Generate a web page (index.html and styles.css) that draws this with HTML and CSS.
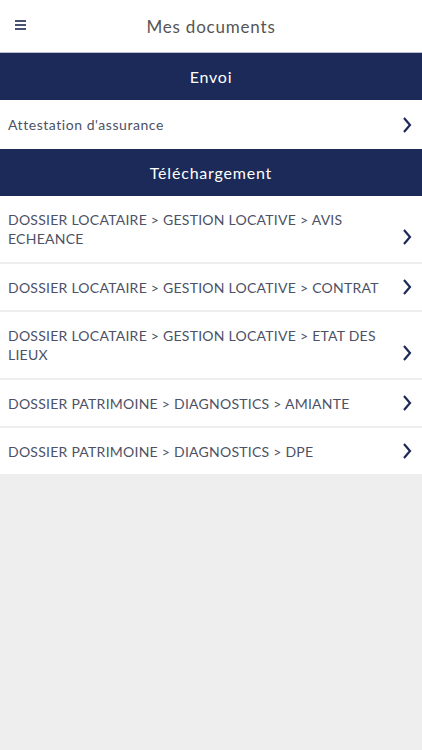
FILE: index.html
```html
<!DOCTYPE html>
<html lang="fr">
<head>
    <meta charset="UTF-8">
    <meta name="viewport" content="width=device-width, initial-scale=1.0">
    <title>Mes documents</title>
    <link rel="stylesheet" href="styles.css">
</head>
<body>
    <!-- Top bar -->
    <div class="top-bar">
        <div class="menu-btn">
            <span></span><span></span><span></span>
        </div>
        <div class="page-title">Mes documents</div>
    </div>

    <!-- Envoi -->
    <div class="section-head">Envoi</div>
    <div class="doc-list">
        <div class="doc-row upload">
            <div class="doc-name mixed">Attestation d'assurance</div>
            <svg class="chevron" viewBox="0 0 10 18"><path d="M2 2l6 7-6 7"/></svg>
        </div>
    </div>

    <!-- Téléchargement -->
    <div class="section-head">Téléchargement</div>
    <div class="doc-list">
        <div class="doc-row tall">
            <div class="doc-name">DOSSIER LOCATAIRE &gt; GESTION LOCATIVE &gt; AVIS ECHEANCE</div>
            <svg class="chevron low" viewBox="0 0 10 18"><path d="M2 2l6 7-6 7"/></svg>
        </div>
        <div class="doc-row">
            <div class="doc-name">DOSSIER LOCATAIRE &gt; GESTION LOCATIVE &gt; CONTRAT</div>
            <svg class="chevron" viewBox="0 0 10 18"><path d="M2 2l6 7-6 7"/></svg>
        </div>
        <div class="doc-row tall">
            <div class="doc-name">DOSSIER LOCATAIRE &gt; GESTION LOCATIVE &gt; ETAT DES LIEUX</div>
            <svg class="chevron low" viewBox="0 0 10 18"><path d="M2 2l6 7-6 7"/></svg>
        </div>
        <div class="doc-row">
            <div class="doc-name">DOSSIER PATRIMOINE &gt; DIAGNOSTICS &gt; AMIANTE</div>
            <svg class="chevron" viewBox="0 0 10 18"><path d="M2 2l6 7-6 7"/></svg>
        </div>
        <div class="doc-row">
            <div class="doc-name">DOSSIER PATRIMOINE &gt; DIAGNOSTICS &gt; DPE</div>
            <svg class="chevron" viewBox="0 0 10 18"><path d="M2 2l6 7-6 7"/></svg>
        </div>
    </div>
</body>
</html>
```

FILE: styles.css
```css
body {
    font-family: Lato, "Open Sans", sans-serif;
    background-color: #eeeeee;
    color: #4c5165;
    margin: 0;
}

.top-bar {
    height: 52px;
    background-color: #ffffff;
    display: flex;
    align-items: center;
    justify-content: center;
    position: relative;
    border-bottom: 1px solid #b9bfd3;
}

.menu-btn {
    position: absolute;
    left: 15px;
    top: 20px;
    width: 11px;
    display: flex;
    flex-direction: column;
    gap: 2px;
}

.menu-btn span {
    height: 2px;
    background-color: #4a5272;
}

.page-title {
    font-size: 17px;
    color: #555555;
    letter-spacing: 0.8px;
}

.section-head {
    height: 47px;
    background-color: #1b2a58;
    color: #ffffff;
    font-size: 16px;
    display: flex;
    align-items: center;
    justify-content: center;
    letter-spacing: 0.8px;
}

.doc-list {
    display: flex;
    flex-direction: column;
    gap: 2px;
}

.doc-row {
    height: 46px;
    background-color: #ffffff;
    display: flex;
    align-items: center;
    padding: 0 10px 0 8px;
}

.doc-row.upload {
    height: 49px;
}

.doc-row.tall {
    height: 66px;
}

.doc-name {
    flex: 1;
    font-size: 14px;
    line-height: 19px;
    letter-spacing: 0.25px;
    padding-right: 20px;
}

.doc-name.mixed {
    letter-spacing: 0.55px;
}

.chevron {
    width: 10px;
    height: 18px;
    fill: none;
    stroke: #1b2a58;
    stroke-width: 2.2;
}

.chevron.low {
    margin-top: 16px;
}
```
